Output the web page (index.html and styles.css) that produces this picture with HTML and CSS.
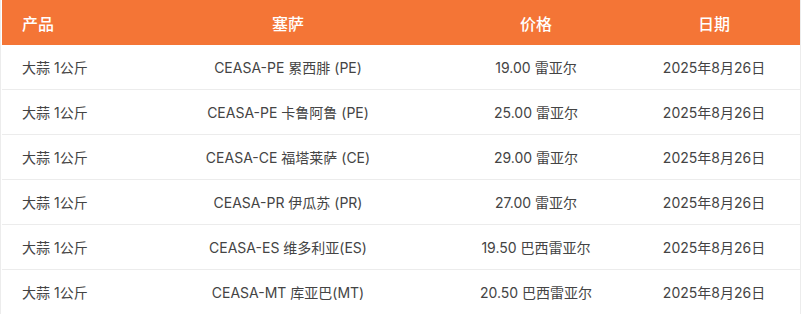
FILE: index.html
```html
<!DOCTYPE html>
<html lang="zh">
<head>
<meta charset="utf-8">
<link rel="stylesheet" href="styles.css">
</head>
<body>
<div class="wrap">
<table class="prices">
  <thead>
    <tr><th class="c1">产品</th><th class="c2">塞萨</th><th class="c3">价格</th><th class="c4">日期</th></tr>
  </thead>
  <tbody>
    <tr><td class="c1">大蒜 1公斤</td><td class="c2">CEASA-PE 累西腓 (PE)</td><td class="c3">19.00 雷亚尔</td><td class="c4">2025年8月26日</td></tr>
    <tr><td class="c1">大蒜 1公斤</td><td class="c2">CEASA-PE 卡鲁阿鲁 (PE)</td><td class="c3">25.00 雷亚尔</td><td class="c4">2025年8月26日</td></tr>
    <tr><td class="c1">大蒜 1公斤</td><td class="c2">CEASA-CE 福塔莱萨 (CE)</td><td class="c3">29.00 雷亚尔</td><td class="c4">2025年8月26日</td></tr>
    <tr><td class="c1">大蒜 1公斤</td><td class="c2">CEASA-PR 伊瓜苏 (PR)</td><td class="c3">27.00 雷亚尔</td><td class="c4">2025年8月26日</td></tr>
    <tr><td class="c1">大蒜 1公斤</td><td class="c2">CEASA-ES 维多利亚(ES)</td><td class="c3">19.50 巴西雷亚尔</td><td class="c4">2025年8月26日</td></tr>
    <tr><td class="c1">大蒜 1公斤</td><td class="c2">CEASA-MT 库亚巴(MT)</td><td class="c3">20.50 巴西雷亚尔</td><td class="c4">2025年8月26日</td></tr>
  </tbody>
</table>
</div>
</body>
</html>
```
FILE: styles.css
```css
html, body {
  margin: 0;
  padding: 0;
  background: #fff;
}
.wrap {
  width: 801px;
  border-left: 1px solid #ececec;
  border-right: 1px solid #ececec;
  padding: 0 0 0 1px;
  box-sizing: border-box;
  height: 314px;
}
.prices {
  width: 798px;
  border-collapse: collapse;
  table-layout: fixed;
  font-family: Inter, "Noto Sans CJK SC", sans-serif;
  font-size: 14px;
  color: #444;
}
.prices th {
  background: #f47536;
  color: #fff;
  font-weight: 500;
  font-size: 16px;
  height: 45px;
  padding: 0;
}
.prices td {
  height: 44px;
  padding: 0;
  border-bottom: 1px solid #ececec;
}
.c1 { width: 130px; text-align: left; padding-left: 20px !important; box-sizing: border-box; }
.c2 { width: 312px; text-align: center; }
.c3 { width: 184px; text-align: center; }
.c4 { width: 172px; text-align: center; }
```
